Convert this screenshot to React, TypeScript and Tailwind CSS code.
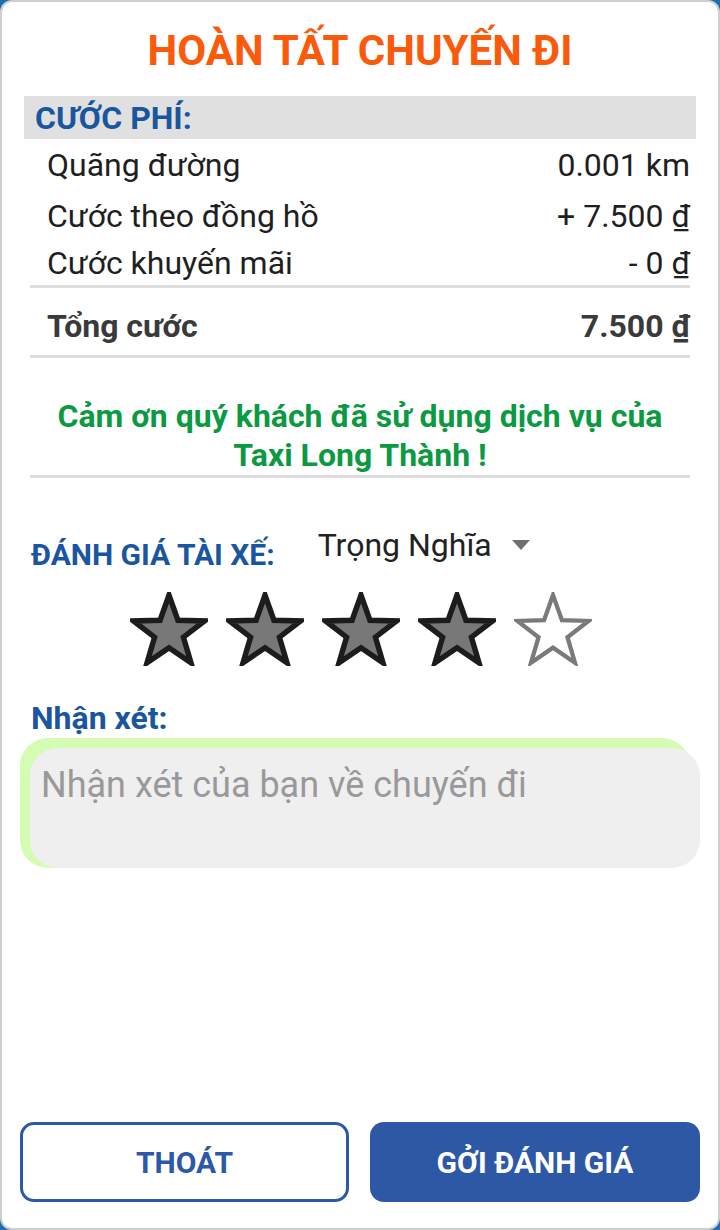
const STAR =
  "50,4 61.46,36.22 95.65,37.17 68.54,58.03 78.21,90.83 50,71.5 21.79,90.83 31.46,58.03 4.35,37.17 38.54,36.22";

function Star({ filled }: { filled: boolean }) {
  return (
    <svg viewBox="0 0 100 95" className="w-[78px] h-[74px]">
      <polygon
        points={STAR}
        fill={filled ? "#787878" : "#ffffff"}
        stroke={filled ? "#1c1c1c" : "#7a7a7a"}
        strokeWidth={filled ? 7 : 5.5}
        strokeLinejoin="miter"
      />
    </svg>
  );
}

function FeeRow({ label, value, unit, h }: { label: string; value: string; unit?: boolean; h: string }) {
  return (
    <div className={`flex items-center justify-between pl-[17px] text-[32px] leading-[38px] text-[#1f1f1f] ${h}`}>
      <span>{label}</span>
      <span>
        {value}
        {unit && <span> ₫</span>}
      </span>
    </div>
  );
}

export default function App() {
  const rating = 4;

  return (
    <div className="w-[720px] h-[1230px] bg-[#1e6db5] font-['Roboto',sans-serif]">
      <div className="h-full rounded-[12px] border-2 border-[#cfcfcf] bg-white flex flex-col">
        <div className="h-[94px] flex items-center justify-center pt-[4px]">
          <h1 className="text-[42px] leading-[50px] font-bold text-[#fb5a0a]">HOÀN TẤT CHUYẾN ĐI</h1>
        </div>

        <div className="mx-[22px] h-[43px] bg-[#e0e0e0] flex items-center pl-[11px]">
          <span className="text-[32px] leading-[38px] font-bold text-[#1a56a0]">CƯỚC PHÍ:</span>
        </div>

        <div className="mx-[28px] flex flex-col">
          <FeeRow label="Quãng đường" value="0.001 km" h="h-[52px]" />
          <FeeRow label="Cước theo đồng hồ" value="+ 7.500" unit h="h-[50px]" />
          <FeeRow label="Cước khuyến mãi" value="- 0" unit h="h-[44px]" />
          <div className="h-[3px] bg-[#dedede]" />
          <div className="flex items-center justify-between pl-[17px] h-[67px] pt-[8px] text-[32px] leading-[38px] font-bold text-[#3a3a3a]">
            <span>Tổng cước</span>
            <span>7.500 ₫</span>
          </div>
          <div className="h-[3px] bg-[#dedede]" />
          <p className="pt-[39px] text-center text-[32px] leading-[39px] font-bold text-[#0b9a42]">
            Cảm ơn quý khách đã sử dụng dịch vụ của
            <br />
            Taxi Long Thành !
          </p>
          <div className="h-[3px] bg-[#dedede]" />
        </div>

        <div className="flex items-start pl-[29px] pt-[48px]">
          <span className="text-[30px] leading-[36px] font-bold text-[#1a56a0] pt-[11px]">ĐÁNH GIÁ TÀI XẾ:</span>
          <div className="flex items-center ml-[43px]">
            <span className="text-[32px] leading-[38px] text-[#222]">Trọng Nghĩa</span>
            <svg viewBox="0 0 18 10" className="w-[18px] h-[10px] ml-[20px]">
              <polygon points="0,0 18,0 9,10" fill="#6f6f6f" />
            </svg>
          </div>
        </div>

        <div className="flex justify-center gap-[18px] mt-[19px] pl-[2px]">
          {[1, 2, 3, 4, 5].map((i) => (
            <Star key={i} filled={i <= rating} />
          ))}
        </div>

        <div className="pl-[29px] mt-[33px] text-[32px] leading-[38px] font-bold text-[#1a56a0]">Nhận xét:</div>

        <div className="relative mx-[18px] mt-[1px] h-[130px]">
          <div className="absolute left-0 top-0 right-[10px] bottom-0 rounded-[28px] bg-[#d4fcb2]" />
          <div className="absolute left-[10px] top-[10px] right-0 bottom-0 rounded-[28px] bg-[#efefef] px-[11px] pt-[16px]">
            <span className="text-[36px] leading-[42px] text-[#999999]">Nhận xét của bạn về chuyến đi</span>
          </div>
        </div>

        <div className="flex-1" />

        <div className="flex gap-[21px] px-[18px] pb-[26px]">
          <button className="w-[329px] h-[80px] rounded-[14px] border-[3px] border-[#2c59a7] bg-white text-[30px] font-bold text-[#2c59a7]">
            THOÁT
          </button>
          <button className="w-[330px] h-[80px] rounded-[14px] bg-[#2c58a6] text-[30px] font-bold text-white">
            GỞI ĐÁNH GIÁ
          </button>
        </div>
      </div>
    </div>
  );
}
